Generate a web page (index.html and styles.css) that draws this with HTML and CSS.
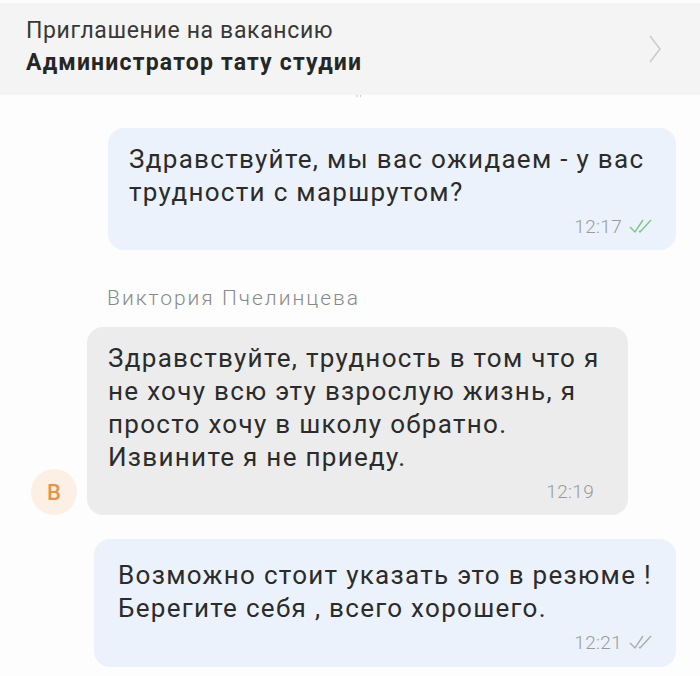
FILE: index.html
```html
<!DOCTYPE html>
<html lang="ru">
<head>
    <meta charset="UTF-8">
    <meta name="viewport" content="width=device-width, initial-scale=1.0">
    <title>Приглашение на вакансию</title>
    <link rel="stylesheet" href="styles.css">
</head>
<body>
    <header class="chat-header">
        <div class="header-text">
            <div class="header-sub">Приглашение на вакансию</div>
            <div class="header-title">Администратор тату студии</div>
        </div>
        <svg class="header-arrow" width="14" height="30" viewBox="0 0 14 30">
            <path d="M2 2 L12 15 L2 28" fill="none" stroke="#c8c8c8" stroke-width="1.4"/>
        </svg>
    </header>
    <div class="cut-marks">' '</div>

    <main class="messages">
        <div class="row row-out">
            <div class="bubble bubble-out bubble-first">
                <p>Здравствуйте, мы вас ожидаем - у вас<br>трудности с маршрутом?</p>
                <div class="meta">
                    <span class="time">12:17</span>
                    <svg class="checks" width="26" height="16" viewBox="0 0 26 16">
                        <path d="M2 9 L7 14 L15 2" fill="none" stroke="#7cc784" stroke-width="1.4"/>
                        <path d="M11 13 L12 14 L23 2" fill="none" stroke="#7cc784" stroke-width="1.4"/>
                    </svg>
                </div>
            </div>
        </div>

        <div class="sender">Виктория Пчелинцева</div>
        <div class="row row-in">
            <div class="avatar">В</div>
            <div class="bubble bubble-in">
                <p>Здравствуйте, трудность в том что я<br>не хочу всю эту взрослую жизнь, я<br>просто хочу в школу обратно.<br>Извините я не приеду.</p>
                <div class="meta">
                    <span class="time">12:19</span>
                </div>
            </div>
        </div>

        <div class="row row-out">
            <div class="bubble bubble-out bubble-last">
                <p>Возможно стоит указать это в резюме !<br>Берегите себя , всего хорошего.</p>
                <div class="meta">
                    <span class="time">12:21</span>
                    <svg class="checks" width="26" height="16" viewBox="0 0 26 16">
                        <path d="M2 9 L7 14 L15 2" fill="none" stroke="#a9adb3" stroke-width="1.4"/>
                        <path d="M11 13 L12 14 L23 2" fill="none" stroke="#a9adb3" stroke-width="1.4"/>
                    </svg>
                </div>
            </div>
        </div>
    </main>
</body>
</html>
```

FILE: styles.css
```css
body {
    font-family: Roboto, "Liberation Sans", Arial, sans-serif;
    margin: 0;
    padding: 0;
    background-color: #fdfdfd;
    color: #2a2a2a;
}

.chat-header {
    display: flex;
    justify-content: space-between;
    align-items: center;
    height: 92px;
    margin-top: 3px;
    padding: 0 38px 0 26px;
    box-sizing: border-box;
    background-color: #f4f4f4;
}

.header-text {
    padding-bottom: 4px;
}

.header-sub {
    font-size: 23px;
    line-height: 32px;
    letter-spacing: 0.65px;
    color: #383838;
}

.header-title {
    font-size: 23px;
    line-height: 32px;
    font-weight: bold;
    letter-spacing: 1.2px;
    color: #262626;
}

.cut-marks {
    height: 0;
    padding-left: 356px;
    font-size: 9px;
    line-height: 1;
    color: #b0b0b0;
}

.messages {
    display: flex;
    flex-direction: column;
    padding: 0 24px 0 31px;
}

.row {
    display: flex;
}

.row-out {
    justify-content: flex-end;
}

.row-in {
    align-items: flex-end;
    gap: 10px;
}

.bubble {
    border-radius: 16px;
    padding: 15px 20px 14px 21px;
    box-sizing: border-box;
}

.bubble p {
    margin: 0;
    font-size: 26px;
    line-height: 33px;
    letter-spacing: 1.3px;
    color: #2b2b2b;
    white-space: nowrap;
}

.bubble-out {
    background-color: #ebf2fc;
}

.bubble-first {
    width: 568px;
    margin-top: 33px;
}

.bubble-in {
    width: 541px;
    background-color: #ececec;
}

.bubble-last {
    width: 582px;
    margin-top: 24px;
    padding-top: 20px;
    padding-left: 24px;
    padding-bottom: 15px;
}

.meta {
    display: flex;
    justify-content: flex-end;
    align-items: center;
    gap: 6px;
    margin-top: 7px;
    height: 20px;
}

.time {
    font-size: 19px;
    font-weight: 300;
    letter-spacing: 0.3px;
    color: #9a9a9a;
}

.bubble-first .meta,
.bubble-last .meta {
    padding-right: 2px;
}

.bubble-in .meta {
    padding-right: 14px;
}

.sender {
    margin: 36px 0 17px 76px;
    font-size: 21px;
    line-height: 24px;
    font-weight: 300;
    letter-spacing: 2px;
    color: #8a8a8a;
}

.avatar {
    display: flex;
    justify-content: center;
    align-items: center;
    width: 46px;
    height: 46px;
    border-radius: 50%;
    background-color: #fcefe4;
    color: #e39550;
    font-size: 22px;
    font-weight: 500;
    flex-shrink: 0;
}
```
